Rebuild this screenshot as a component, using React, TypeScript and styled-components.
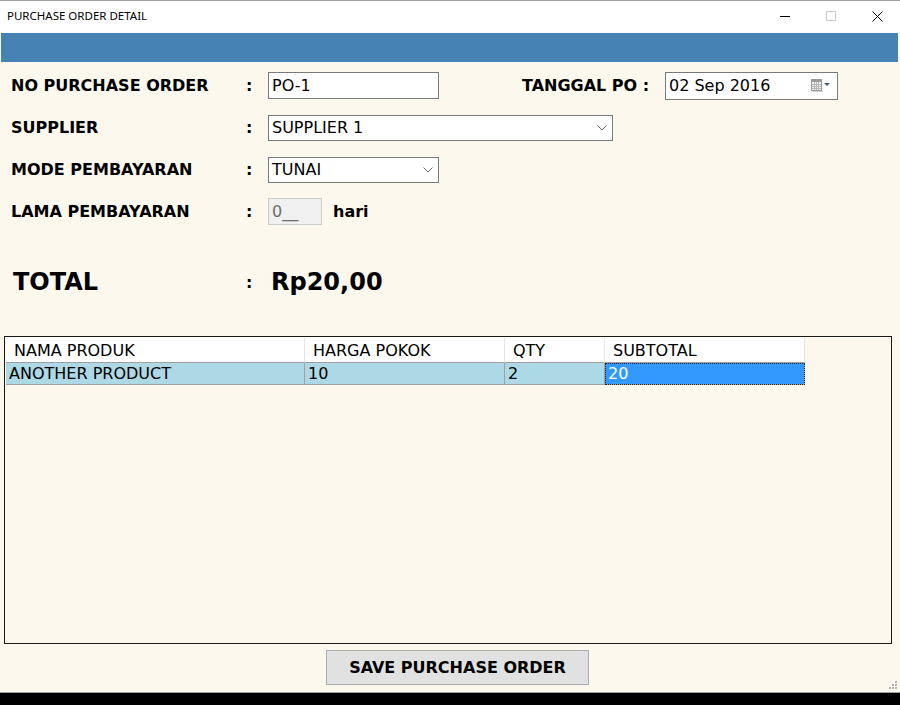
import React from "react";
import styled, { createGlobalStyle } from "styled-components";

const Global = createGlobalStyle`
  html, body { margin: 0; padding: 0; background: #fdf8ee; }
  body { width: 900px; height: 705px; overflow: hidden; }
`;

const Window = styled.div`
  position: relative;
  width: 900px;
  height: 705px;
  display: flex;
  flex-direction: column;
  background: #fdf8ee;
  color: #000;
  font-family: "DejaVu Sans", Verdana, sans-serif;
`;

const TitleBar = styled.div`
  height: 32px;
  border-top: 1px solid #a3a3a3;
  background: #fff;
  display: flex;
  align-items: center;
  padding-left: 7px;
`;

const TitleText = styled.div`
  flex: 1;
  padding-bottom: 3px;
  font-family: "Noto Sans", "Open Sans", sans-serif;
  font-size: 11.5px;
  color: #000;
`;

const WinButtons = styled.div`
  display: flex;
  height: 32px;
`;

const WinBtn = styled.div`
  width: 46px;
  height: 32px;
  display: flex;
  align-items: center;
  justify-content: center;
  padding-bottom: 2px;
  box-sizing: border-box;
`;

const BlueBar = styled.div`
  height: 29px;
  margin: 0 2px 0 1px;
  background: #4682b4;
`;

const Content = styled.div`
  flex: 1;
  display: flex;
  flex-direction: column;
  padding-top: 10px;
`;

const Form = styled.div`
  display: flex;
  flex-direction: column;
  gap: 15px;
  padding-left: 11px;
`;

const FormRow = styled.div`
  display: flex;
  align-items: center;
  height: 27px;
`;

const Label = styled.div<{ $big?: boolean }>`
  width: ${(p) => (p.$big ? "233px" : "235px")};
  padding-left: ${(p) => (p.$big ? "2px" : "0")};
  font-weight: bold;
  font-size: ${(p) => (p.$big ? "24px" : "16px")};
  white-space: nowrap;
`;

const Colon = styled.div<{ $w?: number }>`
  width: ${(p) => p.$w ?? 22}px;
  font-weight: bold;
  font-size: 16px;
`;

const Field = styled.div<{ $w: number; $h?: number; $disabled?: boolean }>`
  box-sizing: border-box;
  width: ${(p) => p.$w}px;
  height: ${(p) => p.$h ?? 27}px;
  border: 1px solid ${(p) => (p.$disabled ? "#cccccc" : "#7a7a7a")};
  background: ${(p) => (p.$disabled ? "#f0f0f0" : "#fff")};
  color: ${(p) => (p.$disabled ? "#6d6d6d" : "#000")};
  display: flex;
  align-items: center;
  justify-content: space-between;
  padding: 0 5px 0 3px;
  font-size: 16px;
  white-space: nowrap;
`;

const SideLabel = styled.div`
  margin-left: 83px;
  width: 143px;
  font-weight: bold;
  font-size: 16px;
  white-space: nowrap;
`;

const Unit = styled.div`
  margin-left: 11px;
  font-weight: bold;
  font-size: 16px;
`;

const TotalRow = styled.div`
  display: flex;
  align-items: center;
  height: 32px;
  margin-top: 41px;
  padding-left: 11px;
`;

const TotalValue = styled.div`
  font-weight: bold;
  font-size: 24px;
`;

const TableBox = styled.div`
  box-sizing: border-box;
  margin: 38px 0 0 4px;
  width: 888px;
  height: 308px;
  border: 1px solid #1a1a1a;
  padding: 1px;
`;

const Grid = styled.div`
  display: grid;
  grid-template-columns: 299px 200px 100px 200px;
  width: 799px;
`;

const HeadCell = styled.div`
  box-sizing: border-box;
  height: 25px;
  background: #fff;
  border-right: 1px solid #e4e4e4;
  border-bottom: 1px solid #a0a0a0;
  padding-left: 8px;
  display: flex;
  align-items: center;
  font-size: 16px;
  white-space: nowrap;
`;

const Cell = styled.div<{ $selected?: boolean }>`
  box-sizing: border-box;
  height: 22px;
  background: ${(p) => (p.$selected ? "#3399ff" : "#add8e6")};
  color: ${(p) => (p.$selected ? "#fff" : "#000")};
  border-right: 1px solid #a0a0a0;
  border-bottom: 1px solid #a0a0a0;
  outline: ${(p) => (p.$selected ? "1px dotted #222" : "none")};
  outline-offset: -1px;
  padding-left: 3px;
  display: flex;
  align-items: center;
  font-size: 16px;
  white-space: nowrap;
`;

const ButtonRow = styled.div`
  margin-top: 6px;
  display: flex;
  justify-content: center;
  padding-left: 15px;
`;

const SaveButton = styled.div`
  box-sizing: border-box;
  width: 263px;
  height: 35px;
  background: #e1e1e1;
  border: 1px solid #adadad;
  display: flex;
  align-items: center;
  justify-content: center;
  font-weight: bold;
  font-size: 16px;
`;

const BottomEdge = styled.div`
  height: 12px;
  border-top: 1px solid #a0a0a0;
  background: #000;
`;

const Grip = styled.svg`
  position: absolute;
  right: 2px;
  bottom: 15px;
`;

const Chevron = () => (
  <svg width="10" height="6" viewBox="0 0 10 6">
    <polyline points="0.5,0.5 5,5 9.5,0.5" fill="none" stroke="#6a6a6a" strokeWidth="1" />
  </svg>
);

const CalendarIcon = () => (
  <svg width="21" height="13" viewBox="0 0 21 13">
    <rect x="0.5" y="0.5" width="10" height="11" fill="#f4f4f4" stroke="#9a9a9a" />
    <rect x="1" y="1" width="9" height="2" fill="#9a9a9a" />
    <g stroke="#b6b6b6" strokeWidth="1">
      <line x1="3.5" y1="3" x2="3.5" y2="11" />
      <line x1="5.5" y1="3" x2="5.5" y2="11" />
      <line x1="7.5" y1="3" x2="7.5" y2="11" />
      <line x1="1" y1="5.5" x2="10" y2="5.5" />
      <line x1="1" y1="7.5" x2="10" y2="7.5" />
      <line x1="1" y1="9.5" x2="10" y2="9.5" />
    </g>
    <rect x="2" y="12" width="10" height="1" fill="#cfcfcf" />
    <polygon points="13,4 19,4 16,7" fill="#4a5a6a" />
  </svg>
);

export default function App() {
  return (
    <>
      <Global />
      <Window>
        <TitleBar>
          <TitleText>PURCHASE ORDER DETAIL</TitleText>
          <WinButtons>
            <WinBtn>
              <svg width="10" height="10" viewBox="0 0 10 10">
                <line x1="0" y1="5.5" x2="10" y2="5.5" stroke="#000" />
              </svg>
            </WinBtn>
            <WinBtn>
              <svg width="10" height="10" viewBox="0 0 10 10">
                <rect x="0.5" y="0.5" width="9" height="9" fill="none" stroke="#c8c8c8" />
              </svg>
            </WinBtn>
            <WinBtn>
              <svg width="11" height="11" viewBox="0 0 11 11">
                <path d="M0.5 0.5 L10.5 10.5 M10.5 0.5 L0.5 10.5" stroke="#000" strokeWidth="1" />
              </svg>
            </WinBtn>
          </WinButtons>
        </TitleBar>
        <BlueBar />
        <Content>
          <Form>
            <FormRow>
              <Label>NO PURCHASE ORDER</Label>
              <Colon>:</Colon>
              <Field $w={171}>PO-1</Field>
              <SideLabel>TANGGAL PO :</SideLabel>
              <Field $w={173} $h={28}>
                <span>02 Sep 2016</span>
                <CalendarIcon />
              </Field>
            </FormRow>
            <FormRow>
              <Label>SUPPLIER</Label>
              <Colon>:</Colon>
              <Field $w={345} $h={26}>
                <span>SUPPLIER 1</span>
                <Chevron />
              </Field>
            </FormRow>
            <FormRow>
              <Label>MODE PEMBAYARAN</Label>
              <Colon>:</Colon>
              <Field $w={171} $h={26}>
                <span>TUNAI</span>
                <Chevron />
              </Field>
            </FormRow>
            <FormRow>
              <Label>LAMA PEMBAYARAN</Label>
              <Colon>:</Colon>
              <Field $w={54} $disabled>
                0__
              </Field>
              <Unit>hari</Unit>
            </FormRow>
          </Form>
          <TotalRow>
            <Label $big>TOTAL</Label>
            <Colon $w={25}>:</Colon>
            <TotalValue>Rp20,00</TotalValue>
          </TotalRow>
          <TableBox>
            <Grid>
              <HeadCell>NAMA PRODUK</HeadCell>
              <HeadCell>HARGA POKOK</HeadCell>
              <HeadCell>QTY</HeadCell>
              <HeadCell>SUBTOTAL</HeadCell>
              <Cell>ANOTHER PRODUCT</Cell>
              <Cell>10</Cell>
              <Cell>2</Cell>
              <Cell $selected>20</Cell>
            </Grid>
          </TableBox>
          <ButtonRow>
            <SaveButton>SAVE PURCHASE ORDER</SaveButton>
          </ButtonRow>
        </Content>
        <BottomEdge />
        <Grip width="10" height="10" viewBox="0 0 10 10">
          <g fill="#b3b3b3">
            <rect x="7" y="1" width="2" height="2" />
            <rect x="4" y="4" width="2" height="2" />
            <rect x="7" y="4" width="2" height="2" />
            <rect x="1" y="7" width="2" height="2" />
            <rect x="4" y="7" width="2" height="2" />
            <rect x="7" y="7" width="2" height="2" />
          </g>
        </Grip>
      </Window>
    </>
  );
}
